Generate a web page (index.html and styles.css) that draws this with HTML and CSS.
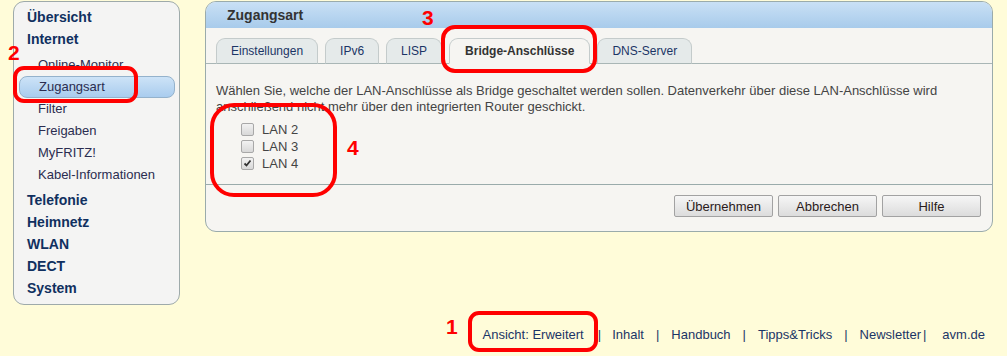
FILE: index.html
```html
<!DOCTYPE html>
<html lang="de">
<head>
    <meta charset="UTF-8">
    <meta name="viewport" content="width=device-width, initial-scale=1.0">
    <title>FRITZ!Box - Zugangsart</title>
    <link rel="stylesheet" href="styles.css">
</head>
<body>
    <div class="page">
        <nav class="sidebar">
            <a class="main-item">Übersicht</a>
            <a class="main-item">Internet</a>
            <div class="sub-list">
                <a class="sub-item">Online-Monitor</a>
                <a class="sub-item active">Zugangsart</a>
                <a class="sub-item">Filter</a>
                <a class="sub-item">Freigaben</a>
                <a class="sub-item">MyFRITZ!</a>
                <a class="sub-item">Kabel-Informationen</a>
            </div>
            <a class="main-item">Telefonie</a>
            <a class="main-item">Heimnetz</a>
            <a class="main-item">WLAN</a>
            <a class="main-item">DECT</a>
            <a class="main-item">System</a>
        </nav>

        <main class="panel">
            <div class="panel-head">Zugangsart</div>
            <div class="tabs">
                <span class="tab">Einstellungen</span>
                <span class="tab">IPv6</span>
                <span class="tab">LISP</span>
                <span class="tab active">Bridge-Anschlüsse</span>
                <span class="tab">DNS-Server</span>
            </div>
            <div class="panel-body">
                <p>Wählen Sie, welche der LAN-Anschlüsse als Bridge geschaltet werden sollen. Datenverkehr über diese LAN-Anschlüsse wird anschließend nicht mehr über den integrierten Router geschickt.</p>
                <div class="lan-list">
                    <label class="lan"><input type="checkbox"><span class="box"><svg viewBox="0 0 11 11"><path d="M2.5 5.5 L4.5 7.5 L8.5 2.5" /></svg></span>LAN 2</label>
                    <label class="lan"><input type="checkbox"><span class="box"><svg viewBox="0 0 11 11"><path d="M2.5 5.5 L4.5 7.5 L8.5 2.5" /></svg></span>LAN 3</label>
                    <label class="lan"><input type="checkbox" checked><span class="box"><svg viewBox="0 0 11 11"><path d="M2.5 5.5 L4.5 7.5 L8.5 2.5" /></svg></span>LAN 4</label>
                </div>
            </div>
            <div class="buttons">
                <button>Übernehmen</button>
                <button>Abbrechen</button>
                <button>Hilfe</button>
            </div>
        </main>
    </div>

    <footer class="footer">
        <a>Ansicht: Erweitert</a><span class="sep first">|</span>
        <a>Inhalt</a><span class="sep">|</span>
        <a>Handbuch</a><span class="sep">|</span>
        <a>Tipps&amp;Tricks</a><span class="sep">|</span>
        <a>Newsletter</a><span class="sep tight">|</span>
        <a>avm.de</a>
    </footer>

    <!-- Markierungen -->
    <span class="mark-num n1">1</span>
    <span class="mark-num n2">2</span>
    <span class="mark-num n3">3</span>
    <span class="mark-num n4">4</span>
    <span class="mark-box b1"></span>
    <span class="mark-box b2"></span>
    <span class="mark-box b3"></span>
    <span class="mark-box b4"></span>
</body>
</html>
```

FILE: styles.css
```css
* {
    box-sizing: border-box;
}
body {
    margin: 0;
    padding-top: 1px;
    position: relative;
    font-family: "Liberation Sans", Arial, sans-serif;
    font-size: 13px;
    background-color: #fffcd9;
    height: 356px;
    overflow: hidden;
}
.page {
    display: flex;
    align-items: flex-start;
    gap: 25px;
    padding-left: 13px;
}

/* Navigation links */
.sidebar {
    width: 167px;
    height: 304px;
    padding: 4px 4px 0 4px;
    background-color: #f4f4f3;
    border: 1px solid #9eaaaa;
    border-radius: 11px;
    display: flex;
    flex-direction: column;
}
.main-item {
    display: block;
    height: 22px;
    line-height: 22px;
    padding-left: 9px;
    font-size: 14px;
    font-weight: bold;
    color: #10305f;
}
.sub-list {
    margin: 4px 0 3px 0;
}
.sub-item {
    display: block;
    height: 22px;
    line-height: 22px;
    padding-left: 20px;
    color: #2b2d50;
}
.sub-item.active {
    margin-left: 1px;
    padding-left: 19px;
    line-height: 20px;
    background: linear-gradient(#cde3f7, #a9ccee);
    border: 1px solid #94b2cc;
    border-radius: 8px;
}

/* Inhalt */
.panel {
    width: 788px;
    background-color: #f6f5f2;
    border: 1px solid #9aabab;
    border-radius: 11px;
    overflow: hidden;
}
.panel-head {
    height: 26px;
    line-height: 26px;
    padding-left: 21px;
    font-size: 14px;
    font-weight: bold;
    color: #333;
    background: linear-gradient(#c9e0f5, #a8cbeb);
}
.tabs {
    display: flex;
    gap: 7px;
    margin-top: 10px;
    padding-left: 10px;
    border-bottom: 1px solid #a9b6b6;
}
.tab {
    height: 26px;
    line-height: 25px;
    padding: 0 14px;
    margin-bottom: -1px;
    font-size: 12px;
    color: #1b3566;
    background-color: #e5eaea;
    border: 1px solid #c4cbcb;
    border-bottom-color: #a9b6b6;
    border-radius: 9px 9px 0 0;
}
.tab.active {
    padding: 0 15px;
    font-weight: bold;
    color: #333;
    background-color: #f6f5f2;
    border-bottom-color: #f6f5f2;
}
.panel-body {
    padding: 19px 10px 12px 10px;
    border-bottom: 1px solid #9aabab;
}
.panel-body p {
    margin: 0;
    line-height: 16px;
    color: #444;
}
.lan-list {
    margin-top: 6px;
    padding-left: 25px;
}
.lan {
    display: flex;
    align-items: center;
    height: 17px;
    color: #444;
}
.lan input {
    display: none;
}
.box {
    width: 13px;
    height: 13px;
    margin-right: 8px;
    border: 1px solid #a8a8a8;
    border-radius: 2px;
    background: linear-gradient(#f2f2f2, #d8d8d8);
    display: flex;
    align-items: center;
    justify-content: center;
}
.box svg {
    display: none;
    width: 11px;
    height: 11px;
    fill: none;
    stroke: #333;
    stroke-width: 1.8;
}
.lan input:checked + .box svg {
    display: block;
}
.buttons {
    display: flex;
    justify-content: flex-end;
    gap: 5px;
    padding: 10px 11px 14px 0;
}
.buttons button {
    width: 99px;
    height: 22px;
    font-family: "Liberation Sans", Arial, sans-serif;
    font-size: 13px;
    color: #2a1a1a;
    background: linear-gradient(#f6f6f6, #dcdcdc);
    border: 1px solid #a2a2a2;
    border-radius: 2px;
}

/* Fusszeile */
.footer {
    display: flex;
    justify-content: flex-end;
    padding-right: 22px;
    margin-top: 22px;
    line-height: 16px;
    color: #1b3566;
}
.sep {
    margin: 0 12px;
}
.sep.first {
    margin: 0 11px 0 14px;
}
.sep.tight {
    margin: 0 16px 0 2px;
}

/* rote Markierungen */
.mark-num {
    position: absolute;
    font-size: 21px;
    line-height: 21px;
    font-weight: bold;
    color: #f00;
}
.n1 { left: 446px; top: 316px; }
.n2 { left: 8px; top: 42px; }
.n3 { left: 422px; top: 7px; }
.n4 { left: 347px; top: 137px; }
.mark-box {
    position: absolute;
    border: 4px solid #f00;
    border-radius: 11px;
}
.b1 { left: 468px; top: 311px; width: 130px; height: 41px; }
.b2 { left: 13px; top: 66px; width: 125px; height: 37px; }
.b3 { left: 441px; top: 25px; width: 156px; height: 48px; border-radius: 14px; }
.b4 { left: 210px; top: 103px; width: 127px; height: 94px; border-radius: 24px; }
```
